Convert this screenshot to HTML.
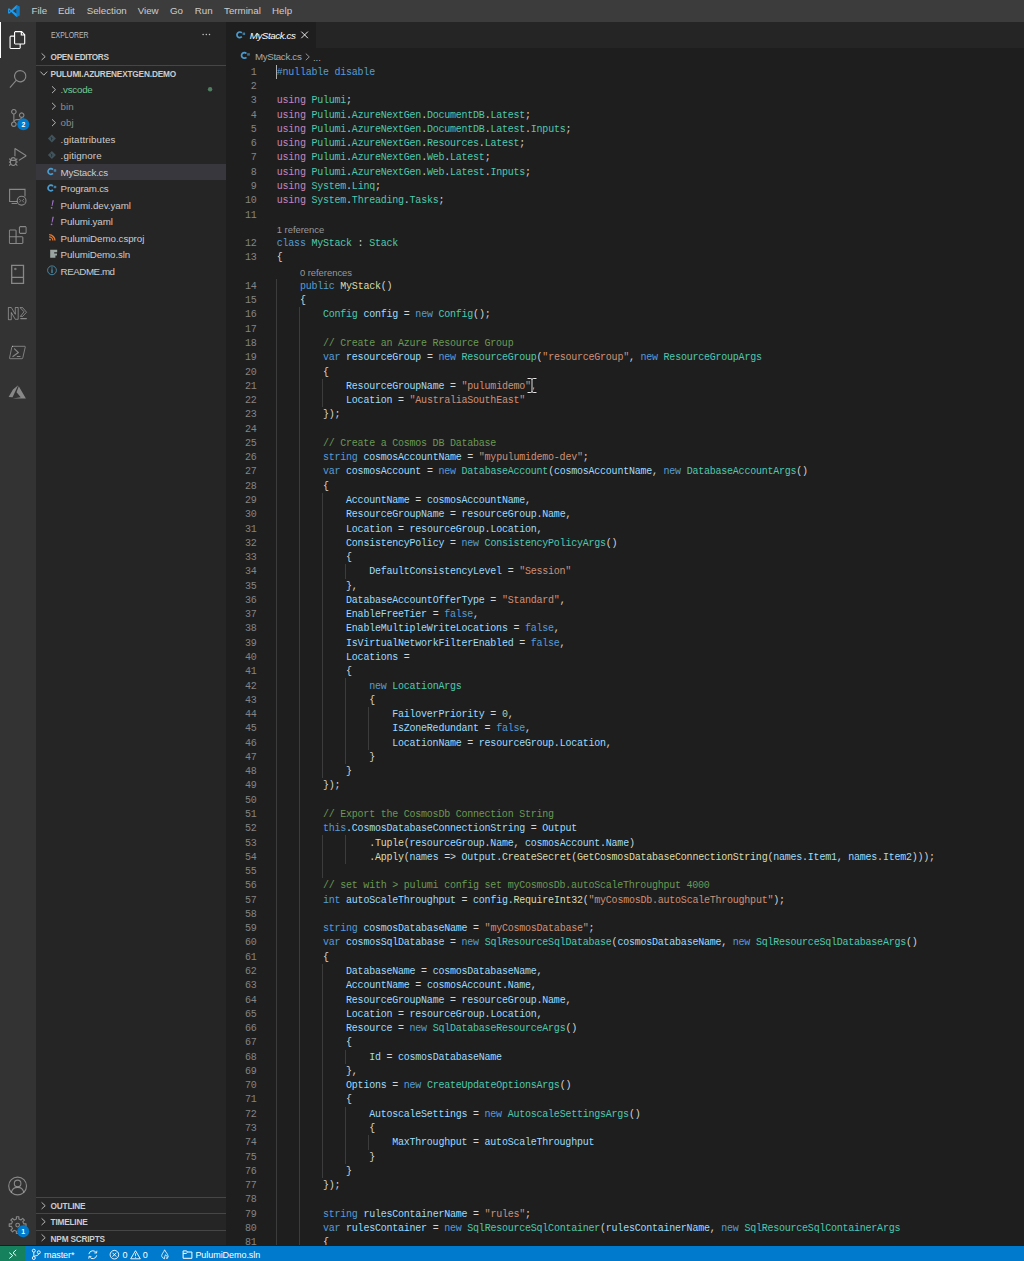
<!DOCTYPE html>
<html lang="en"><head><meta charset="utf-8"><title>MyStack.cs - Pulumi.AzureNextGen.Demo - Visual Studio Code</title>
<style>
*{box-sizing:border-box;margin:0;padding:0}
html,body{width:1024px;height:1261px;overflow:hidden;background:#1e1e1e}
body{position:relative;font-family:"Liberation Sans",sans-serif;font-size:9.75px;color:#ccc;-webkit-font-smoothing:antialiased}
i{font-style:normal}
#title{position:absolute;left:0;top:0;width:1024px;height:22px;background:#3c3c3c}
#title .m{position:absolute;top:0;height:22px;line-height:21.5px;color:#ccc;font-size:9.75px;white-space:nowrap}
#act{position:absolute;left:0;top:22px;width:35.5px;height:1222.5px;background:#333}
#side{position:absolute;left:35.5px;top:22px;width:190px;height:1222.5px;background:#252526}
#edit{position:absolute;left:225.5px;top:22px;width:798.5px;height:1222.5px;background:#1e1e1e}
#tabs{position:absolute;left:0;top:0;width:100%;height:26.25px;background:#252526}
#tab{position:absolute;left:0;top:0;width:90.6px;height:26.25px;background:#1e1e1e}
#bc{position:absolute;left:0;top:26.25px;width:100%;height:16.5px}
#code{position:absolute;left:0;top:42.75px;width:100%;height:1180px;overflow:hidden;font-family:"Liberation Mono",monospace;font-size:10px;letter-spacing:-0.23px;line-height:14.25px;color:#d4d4d4;white-space:pre}
#code .ln{position:absolute;left:0;width:31px;text-align:right;color:#858585}
#code .cd{position:absolute;left:51.3px}
#code .cl{position:absolute;font-family:"Liberation Sans",sans-serif;font-size:9.45px;letter-spacing:-.03px;color:#999}
#code .g{position:absolute;width:1px;height:14.3px;background:#3c3c3c}
.k{color:#569cd6}.u{color:#c586c0}.t{color:#4ec9b0}.s{color:#ce9178}.c{color:#6a9955}.v{color:#9cdcfe}.f{color:#dcdcaa}.n{color:#b5cea8}
#side .hd{position:absolute;left:15.1px;top:0;height:26.25px;line-height:28.2px;font-size:8.25px;color:#bbb}
#side .ph{position:absolute;left:0;width:190px;height:16.5px;line-height:19px;font-size:8.25px;font-weight:bold;color:#ccc;white-space:nowrap}
#side .ph span{position:absolute;left:15.1px}
#side .sep{position:absolute;left:0;width:190px;height:1px;background:rgba(204,204,204,.2)}
#side .r{position:absolute;left:0.5px;width:189.5px;height:16.5px;line-height:18.6px;color:#ccc;white-space:nowrap}
#side .r span{position:absolute;left:24.6px}
#side svg{position:absolute;overflow:visible}
#side .sel{background:#37373d}
#status{position:absolute;left:0;top:1245.5px;width:1024px;height:15.5px;background:#007acc;color:#fff;font-size:9px;line-height:16.5px;white-space:nowrap}
#remote{position:absolute;left:0;top:0;width:25px;height:15.5px;background:#16825d}
#status span{position:absolute;top:0;line-height:18.4px}
</style></head><body>
<div id="title">
<svg style="position:absolute;left:7.5px;top:5.2px;width:12px;height:12px" viewBox="0 0 100 100"><path fill="#1f9cf0" d="M71 1 L96 12 V88 L71 99 L27 58 L9 72 L1 68 V32 L9 28 L27 42 Z M71 28 L40 50 L71 72 Z M10 40 V60 L21 50 Z"/><path fill="#0065a9" d="M71 1 L96 12 V88 L71 99 Z" opacity=".55"/></svg>
<span class="m" style="left:31.5px">File</span><span class="m" style="left:58px">Edit</span><span class="m" style="left:86.7px">Selection</span><span class="m" style="left:137.7px">View</span><span class="m" style="left:170px">Go</span><span class="m" style="left:194.7px">Run</span><span class="m" style="left:224px">Terminal</span><span class="m" style="left:272px">Help</span>
</div>
<div id="act">
<div style="position:absolute;left:0;top:0;width:1.4px;height:36px;background:#fff"></div>
<svg style="position:absolute;left:0;top:0;width:36px;height:1222.5px" viewBox="0 22 36 1222.5" fill="none">
<!-- explorer -->
<svg x="8.75" y="31" width="18" height="18" viewBox="0 0 24 24"><path fill="#fff" d="M17.5 0h-9L7 1.5V6H2.500L1 7.500v15.070L2.500 24h12.070L16 22.570V18h4.700l1.300-1.430V4.500L17.500 0zm0 2.120l2.380 2.380H17.500V2.120zm-3 20.380h-12v-15H7v9.070L8.500 18h6v4.500zm6-6h-12v-15H16V6h4.500v10.500z"/></svg>
<g fill="#fff" fill-opacity=".42" stroke="none">
<!-- search -->
<svg x="8.75" y="70" width="18" height="18" viewBox="0 0 24 24"><path d="M15.250 0a8.250 8.250 0 0 0-6.180 13.720L1 22.880l1.120 1 8.050-9.120A8.251 8.251 0 1 0 15.250.010V0zm0 15a6.750 6.750 0 1 1 0-13.500 6.750 6.750 0 0 1 0 13.500z"/></svg>
<!-- scm -->
<svg x="8.75" y="109" width="18" height="18" viewBox="0 0 24 24"><path d="M21.007 8.222A3.738 3.738 0 0 0 15.045 5.200a3.737 3.737 0 0 0 1.156 6.583 2.988 2.988 0 0 1-2.668 1.670h-2.990a4.456 4.456 0 0 0-2.989 1.165V7.400a3.737 3.737 0 1 0-1.494 0v9.117a3.776 3.776 0 1 0 1.816.099 2.990 2.990 0 0 1 2.668-1.667h2.990a4.484 4.484 0 0 0 4.223-3.039 3.736 3.736 0 0 0 3.250-3.687zM4.565 3.738a2.242 2.242 0 1 1 4.484 0 2.242 2.242 0 0 1-4.484 0zm4.484 16.441a2.242 2.242 0 1 1-4.484 0 2.242 2.242 0 0 1 4.484 0zm8.221-9.715a2.242 2.242 0 1 1 0-4.485 2.242 2.242 0 0 1 0 4.485z"/></svg>
<!-- debug -->
<svg x="8.75" y="148" width="18" height="18" viewBox="0 0 24 24"><path d="M10.940 13.500l-1.320 1.320a3.730 3.730 0 0 0-7.240 0L1.060 13.500 0 14.560l1.720 1.720-.220.220V18H0v1.500h1.500v.080c.077.489.214.966.410 1.420L0 22.940 1.060 24l1.650-1.650A4.308 4.308 0 0 0 6 24a4.310 4.310 0 0 0 3.290-1.650L10.940 24 12 22.940 10.090 21c.198-.464.336-.951.410-1.450v-.100H12V18h-1.500v-1.500l-.220-.220L12 14.560l-1.060-1.060zM6 13.500a2.250 2.250 0 0 1 2.250 2.250h-4.500A2.250 2.250 0 0 1 6 13.500zm3 6a3.330 3.330 0 0 1-3 3 3.330 3.330 0 0 1-3-3v-2.250h6v2.250zm14.760-9.900v1.260L13.500 17.370V15.600l8.500-5.370L9 2v9.460a5.070 5.070 0 0 0-1.500-.720V.630L8.640 0l15.120 9.600z"/></svg>
<!-- extensions -->
<svg x="8.75" y="226" width="18" height="18" viewBox="0 0 24 24"><path d="M13.500 1.500L15 0h7.500L24 1.500V9l-1.500 1.500H15L13.500 9V1.500zm1.500 0V9h7.500V1.500H15zM0 15V6l1.500-1.500H9L10.500 6v7.500H18l1.500 1.500v7.500L18 24H1.500L0 22.500V15zm9-1.500V6H1.500v7.500H9zM9 15H1.500v7.500H9V15zm1.500 7.500H18V15h-7.500v7.500z"/></svg>
<!-- azure -->
<path transform="translate(6.870,381.530) scale(0.865)" d="M13.050 4.240L6.560 18.050L2 18L7.090 9.240L13.050 4.240ZM13.750 5.330L22 19.760H6.740L16.040 18.100L11.170 12.310L13.750 5.330Z"/>
</g>
<g stroke="#fff" stroke-opacity=".42" stroke-width="1.1" fill="none" stroke-linejoin="round" stroke-linecap="round">
<!-- remote explorer -->
<path d="M25 196 V189.400 H9.600 V201.500 H16.800 M12 203.500 H16.600" stroke-linejoin="miter"/>
<circle cx="21.600" cy="200.700" r="4.400"/>
<path d="M19.500 199.300 l1.300 1.400 l-1.300 1.400 M23.700 199.300 l-1.300 1.400 l1.300 1.400" stroke-width=".8"/>
<!-- icon 7 -->
<path d="M11.700 265.400 H23.500 V283.300 H11.700 Z M11.700 277.300 H23.500" stroke-width="1.300" stroke-linejoin="miter"/>
<circle cx="15.200" cy="269" r=".8" stroke-width=".7"/>
<!-- Nx -->
<path d="M8.400 319.300 V307.500 H11.300 L15.300 314.300 V307.500 H18.200 V319.300 H15.300 L11.300 312.500 V319.300 Z" stroke-width=".9"/>
<path d="M20.400 307.600 H22.600 L26.500 312.200 L22.600 316.400 H20.400 L23.800 312.100 Z" stroke-width=".9"/>
<path d="M20.800 318.600 H26.300" stroke-width="1.300"/>
<!-- powershell -->
<path d="M12.600 346.300 H24.600 Q25.500 346.300 25.200 347.300 L22.800 357.800 Q22.600 358.700 21.700 358.700 H10.200 Q9.300 358.700 9.600 357.700 L11.800 347.200 Q12 346.300 12.600 346.300 Z" stroke-width=".9"/>
<path d="M14.500 348.900 L18.400 352.600 L12.900 356.500 M17.300 356.500 H20" stroke-width="1.200"/>
<!-- account -->
<circle cx="17.600" cy="1186" r="8.900"/>
<circle cx="17.600" cy="1183.400" r="3.300"/>
<path d="M11.400 1192.200 A6.400 6.400 0 0 1 23.800 1192.200"/>
<!-- gear -->
<g transform="translate(8.500,1216) scale(0.760)"><path stroke-width="1.450" d="M10.400 3.960 L10.360 0.920 L13.640 0.920 L13.600 3.960 L16.560 5.180 L18.670 3 L21 5.330 L18.820 7.440 L20.040 10.400 L23.080 10.360 L23.080 13.640 L20.040 13.600 L18.820 16.560 L21 18.670 L18.670 21 L16.560 18.820 L13.600 20.040 L13.640 23.080 L10.360 23.080 L10.400 20.040 L7.440 18.820 L5.330 21 L3 18.670 L5.180 16.560 L3.960 13.600 L0.920 13.640 L0.920 10.360 L3.960 10.400 L5.180 7.440 L3 5.330 L5.330 3 L7.440 5.180Z"/><circle cx="12" cy="12" r="2.400" stroke-width="1.450"/></g>
</g>
<!-- badges -->
<circle cx="23.300" cy="124.300" r="6" fill="#007acc"/>
<circle cx="23.200" cy="1231.200" r="6" fill="#007acc"/>
<text x="23.300" y="126.800" fill="#fff" font-family="Liberation Sans, sans-serif" font-size="6.800" font-weight="bold" text-anchor="middle">2</text>
<text x="23.200" y="1233.700" fill="#fff" font-family="Liberation Sans, sans-serif" font-size="6.800" font-weight="bold" text-anchor="middle">1</text>
</svg>
</div>
<div id="side">
<svg style="left:0;top:0;width:190px;height:300px;z-index:2" viewBox="35.5 22 190 300">
<path d="M51.500 86.30 l3.500 3.400 l-3.500 3.400" fill="none" stroke="#c5c5c5" stroke-width=".9"/>
<path d="M51.500 102.80 l3.500 3.400 l-3.500 3.400" fill="none" stroke="#c5c5c5" stroke-width=".9"/>
<path d="M51.500 119.30 l3.500 3.400 l-3.500 3.400" fill="none" stroke="#c5c5c5" stroke-width=".9"/>
<circle cx="209.600" cy="89.20" r="2.200" fill="#73c991" fill-opacity=".55"/>
<g transform="translate(51.400,138.40)"><path d="M0 -4 L4 0 L0 4 L-4 0 Z" fill="#41535b"/><path d="M-1.300 -1.500 L0.700 0.500 M-0.400 -0.600 V1.800" stroke="#252526" stroke-width=".7" fill="none"/></g>
<g transform="translate(51.400,154.90)"><path d="M0 -4 L4 0 L0 4 L-4 0 Z" fill="#41535b"/><path d="M-1.300 -1.500 L0.700 0.500 M-0.400 -0.600 V1.800" stroke="#252526" stroke-width=".7" fill="none"/></g>
<g transform="translate(50.300,171.50)" fill="none" stroke="#4a9cd0"><path d="M2.100 -1.900 A2.800 2.800 0 1 0 2.100 1.900" stroke-width="1.700"/><path d="M3.600 -2.300 V0.300 M4.800 -2.300 V0.300 M2.900 -1.500 H5.500 M2.900 -0.500 H5.500" stroke-width=".55"/></g>
<g transform="translate(50.300,188.00)" fill="none" stroke="#4a9cd0"><path d="M2.100 -1.900 A2.800 2.800 0 1 0 2.100 1.900" stroke-width="1.700"/><path d="M3.600 -2.300 V0.300 M4.800 -2.300 V0.300 M2.900 -1.500 H5.500 M2.900 -0.500 H5.500" stroke-width=".55"/></g>
<g transform="translate(51.400,204.50)"><path d="M0.600 -4.200 L2 -4.200 L0.500 1.600 L-0.300 1.600 Z" fill="#a074c4"/><circle cx="-.3" cy="3.300" r=".85" fill="#a074c4"/></g>
<g transform="translate(51.400,221.00)"><path d="M0.600 -4.200 L2 -4.200 L0.500 1.600 L-0.300 1.600 Z" fill="#a074c4"/><circle cx="-.3" cy="3.300" r=".85" fill="#a074c4"/></g>
<g transform="translate(48.600,240.60)" fill="none" stroke="#e37933"><circle cx=".9" cy="-.9" r=".9" fill="#e37933" stroke="none"/><path d="M0 -3.800 A3.800 3.800 0 0 1 3.800 0" stroke-width="1.300"/><path d="M0 -5.900 A5.900 5.900 0 0 1 5.900 0" stroke-width="1.300"/></g>
<path transform="translate(49.700,249.80)" d="M0 0 H7 V2.400 H4 V3.600 H6.800 V5.700 H5.200 V7.900 H0 Z" fill="#9aa5a1"/>
<g transform="translate(51.500,270.30)"><circle r="4.400" fill="none" stroke="#519aba" stroke-width=".8"/><circle cy="-2.300" r=".7" fill="#519aba"/><path d="M0 -1 V2.700" stroke="#519aba" stroke-width="1.200"/></g>
</svg>
<div class="hd" style="transform:scaleX(.837);transform-origin:0 0">EXPLORER</div>
<svg style="left:166px;top:11.4px;width:9px;height:3px" viewBox="0 0 9 3"><circle cx="1.1" cy="1.5" r=".75" fill="#c5c5c5"/><circle cx="4.3" cy="1.5" r=".75" fill="#c5c5c5"/><circle cx="7.5" cy="1.5" r=".75" fill="#c5c5c5"/></svg>
<div class="ph" style="top:26.25px"><svg style="left:5.6px;top:4.6px;width:5px;height:7.4px" viewBox="0 0 5 7.4"><path d="M.6 .4 L4.2 3.700 L.6 7" fill="none" stroke="#c5c5c5" stroke-width=".9"/></svg><span style="letter-spacing:-0.35px">OPEN EDITORS</span></div>
<div class="sep" style="top:42.5px"></div>
<div class="ph" style="top:42.75px"><svg style="left:4px;top:6.4px;width:7.6px;height:5px" viewBox="0 0 7.6 5"><path d="M.4 .6 L3.800 4.200 L7.200 .6" fill="none" stroke="#c5c5c5" stroke-width=".9"/></svg><span style="letter-spacing:-0.16px">PULUMI.AZURENEXTGEN.DEMO</span></div>
<div class="r" style="top:59.25px;color:#73c991"><!--I0--><span style="letter-spacing:-0.24px">.vscode</span></div>
<div class="r" style="top:75.75px;color:#8c8c8c"><!--I1--><span style="letter-spacing:0.05px">bin</span></div>
<div class="r" style="top:92.25px;color:#8c8c8c"><!--I2--><span style="letter-spacing:0.05px">obj</span></div>
<div class="r" style="top:108.75px"><!--I3--><span style="letter-spacing:0.13px">.gitattributes</span></div>
<div class="r" style="top:125.25px"><!--I4--><span style="letter-spacing:0.10px">.gitignore</span></div>
<div class="r sel" style="top:141.75px"><!--I5--><span style="letter-spacing:-0.26px">MyStack.cs</span></div>
<div class="r" style="top:158.25px"><!--I6--><span style="letter-spacing:-0.19px">Program.cs</span></div>
<div class="r" style="top:174.75px"><!--I7--><span style="letter-spacing:-0.03px">Pulumi.dev.yaml</span></div>
<div class="r" style="top:191.25px"><!--I8--><span style="letter-spacing:-0.08px">Pulumi.yaml</span></div>
<div class="r" style="top:207.75px"><!--I9--><span style="letter-spacing:-0.05px">PulumiDemo.csproj</span></div>
<div class="r" style="top:224.25px"><!--I10--><span style="letter-spacing:-0.10px">PulumiDemo.sln</span></div>
<div class="r" style="top:240.75px"><!--I11--><span style="letter-spacing:-0.44px">README.md</span></div>
<div class="sep" style="top:1174.80px"></div>
<div class="ph" style="top:1175.00px"><svg style="left:5.6px;top:4.6px;width:5px;height:7.4px" viewBox="0 0 5 7.4"><path d="M.6 .4 L4.2 3.700 L.6 7" fill="none" stroke="#c5c5c5" stroke-width=".9"/></svg><span style="letter-spacing:-0.2px">OUTLINE</span></div>
<div class="sep" style="top:1191.20px"></div>
<div class="ph" style="top:1191.40px"><svg style="left:5.6px;top:4.6px;width:5px;height:7.4px" viewBox="0 0 5 7.4"><path d="M.6 .4 L4.2 3.700 L.6 7" fill="none" stroke="#c5c5c5" stroke-width=".9"/></svg><span style="letter-spacing:-0.2px">TIMELINE</span></div>
<div class="sep" style="top:1207.50px"></div>
<div class="ph" style="top:1207.70px"><svg style="left:5.6px;top:4.6px;width:5px;height:7.4px" viewBox="0 0 5 7.4"><path d="M.6 .4 L4.2 3.700 L.6 7" fill="none" stroke="#c5c5c5" stroke-width=".9"/></svg><span style="letter-spacing:-0.2px">NPM SCRIPTS</span></div>
</div>
<div id="edit">
<div id="tabs"><div id="tab"><span style="position:absolute;left:24.2px;top:0;line-height:28px;font-style:italic;color:#fff;letter-spacing:-.41px">MyStack.cs</span></div></div>
<div id="bc"><span style="position:absolute;left:29.400px;top:0;line-height:17.8px;color:#a9a9a9;letter-spacing:-.33px">MyStack.cs</span><span style="position:absolute;left:87.400px;top:0;line-height:19px;color:#a9a9a9">...</span></div>
<svg style="position:absolute;left:0;top:0;width:120px;height:44px;overflow:visible" viewBox="225.5 22 120 44">
<g transform="translate(239.20,34.80)" fill="none" stroke="#4a9cd0"><path d="M2.100 -1.900 A2.800 2.800 0 1 0 2.100 1.900" stroke-width="1.700"/><path d="M3.600 -2.300 V0.300 M4.800 -2.300 V0.300 M2.900 -1.500 H5.500 M2.900 -0.500 H5.500" stroke-width=".55"/></g>
<g transform="translate(243.80,55.40)" fill="none" stroke="#4a9cd0"><path d="M2.100 -1.900 A2.800 2.800 0 1 0 2.100 1.900" stroke-width="1.700"/><path d="M3.600 -2.300 V0.300 M4.800 -2.300 V0.300 M2.900 -1.500 H5.500 M2.900 -0.500 H5.500" stroke-width=".55"/></g>
<path d="M300.800 31.600 L307.400 38.200 M307.400 31.600 L300.800 38.200" stroke="#fff" stroke-width=".9" fill="none"/>
<path d="M305.300 53.600 L308.800 56.900 L305.300 60.200" stroke="#a9a9a9" stroke-width=".85" fill="none"/>
</svg>
<div id="code">
<b class="g" style="top:214.09px;left:50.50px"></b>
<b class="g" style="top:228.37px;left:50.50px"></b>
<b class="g" style="top:242.64px;left:50.50px"></b>
<b class="g" style="top:242.64px;left:73.58px"></b>
<b class="g" style="top:256.91px;left:50.50px"></b>
<b class="g" style="top:256.91px;left:73.58px"></b>
<b class="g" style="top:271.19px;left:50.50px"></b>
<b class="g" style="top:271.19px;left:73.58px"></b>
<b class="g" style="top:285.46px;left:50.50px"></b>
<b class="g" style="top:285.46px;left:73.58px"></b>
<b class="g" style="top:299.73px;left:50.50px"></b>
<b class="g" style="top:299.73px;left:73.58px"></b>
<b class="g" style="top:314.01px;left:50.50px"></b>
<b class="g" style="top:314.01px;left:73.58px"></b>
<b class="g" style="top:314.01px;left:96.66px"></b>
<b class="g" style="top:328.28px;left:50.50px"></b>
<b class="g" style="top:328.28px;left:73.58px"></b>
<b class="g" style="top:328.28px;left:96.66px"></b>
<b class="g" style="top:342.55px;left:50.50px"></b>
<b class="g" style="top:342.55px;left:73.58px"></b>
<b class="g" style="top:356.83px;left:50.50px"></b>
<b class="g" style="top:356.83px;left:73.58px"></b>
<b class="g" style="top:371.10px;left:50.50px"></b>
<b class="g" style="top:371.10px;left:73.58px"></b>
<b class="g" style="top:385.37px;left:50.50px"></b>
<b class="g" style="top:385.37px;left:73.58px"></b>
<b class="g" style="top:399.64px;left:50.50px"></b>
<b class="g" style="top:399.64px;left:73.58px"></b>
<b class="g" style="top:413.92px;left:50.50px"></b>
<b class="g" style="top:413.92px;left:73.58px"></b>
<b class="g" style="top:428.19px;left:50.50px"></b>
<b class="g" style="top:428.19px;left:73.58px"></b>
<b class="g" style="top:428.19px;left:96.66px"></b>
<b class="g" style="top:442.46px;left:50.50px"></b>
<b class="g" style="top:442.46px;left:73.58px"></b>
<b class="g" style="top:442.46px;left:96.66px"></b>
<b class="g" style="top:456.74px;left:50.50px"></b>
<b class="g" style="top:456.74px;left:73.58px"></b>
<b class="g" style="top:456.74px;left:96.66px"></b>
<b class="g" style="top:471.01px;left:50.50px"></b>
<b class="g" style="top:471.01px;left:73.58px"></b>
<b class="g" style="top:471.01px;left:96.66px"></b>
<b class="g" style="top:485.28px;left:50.50px"></b>
<b class="g" style="top:485.28px;left:73.58px"></b>
<b class="g" style="top:485.28px;left:96.66px"></b>
<b class="g" style="top:499.56px;left:50.50px"></b>
<b class="g" style="top:499.56px;left:73.58px"></b>
<b class="g" style="top:499.56px;left:96.66px"></b>
<b class="g" style="top:499.56px;left:119.74px"></b>
<b class="g" style="top:513.83px;left:50.50px"></b>
<b class="g" style="top:513.83px;left:73.58px"></b>
<b class="g" style="top:513.83px;left:96.66px"></b>
<b class="g" style="top:528.10px;left:50.50px"></b>
<b class="g" style="top:528.10px;left:73.58px"></b>
<b class="g" style="top:528.10px;left:96.66px"></b>
<b class="g" style="top:542.37px;left:50.50px"></b>
<b class="g" style="top:542.37px;left:73.58px"></b>
<b class="g" style="top:542.37px;left:96.66px"></b>
<b class="g" style="top:556.65px;left:50.50px"></b>
<b class="g" style="top:556.65px;left:73.58px"></b>
<b class="g" style="top:556.65px;left:96.66px"></b>
<b class="g" style="top:570.92px;left:50.50px"></b>
<b class="g" style="top:570.92px;left:73.58px"></b>
<b class="g" style="top:570.92px;left:96.66px"></b>
<b class="g" style="top:585.19px;left:50.50px"></b>
<b class="g" style="top:585.19px;left:73.58px"></b>
<b class="g" style="top:585.19px;left:96.66px"></b>
<b class="g" style="top:599.47px;left:50.50px"></b>
<b class="g" style="top:599.47px;left:73.58px"></b>
<b class="g" style="top:599.47px;left:96.66px"></b>
<b class="g" style="top:613.74px;left:50.50px"></b>
<b class="g" style="top:613.74px;left:73.58px"></b>
<b class="g" style="top:613.74px;left:96.66px"></b>
<b class="g" style="top:613.74px;left:119.74px"></b>
<b class="g" style="top:628.01px;left:50.50px"></b>
<b class="g" style="top:628.01px;left:73.58px"></b>
<b class="g" style="top:628.01px;left:96.66px"></b>
<b class="g" style="top:628.01px;left:119.74px"></b>
<b class="g" style="top:642.29px;left:50.50px"></b>
<b class="g" style="top:642.29px;left:73.58px"></b>
<b class="g" style="top:642.29px;left:96.66px"></b>
<b class="g" style="top:642.29px;left:119.74px"></b>
<b class="g" style="top:642.29px;left:142.82px"></b>
<b class="g" style="top:656.56px;left:50.50px"></b>
<b class="g" style="top:656.56px;left:73.58px"></b>
<b class="g" style="top:656.56px;left:96.66px"></b>
<b class="g" style="top:656.56px;left:119.74px"></b>
<b class="g" style="top:656.56px;left:142.82px"></b>
<b class="g" style="top:670.83px;left:50.50px"></b>
<b class="g" style="top:670.83px;left:73.58px"></b>
<b class="g" style="top:670.83px;left:96.66px"></b>
<b class="g" style="top:670.83px;left:119.74px"></b>
<b class="g" style="top:670.83px;left:142.82px"></b>
<b class="g" style="top:685.10px;left:50.50px"></b>
<b class="g" style="top:685.10px;left:73.58px"></b>
<b class="g" style="top:685.10px;left:96.66px"></b>
<b class="g" style="top:685.10px;left:119.74px"></b>
<b class="g" style="top:699.38px;left:50.50px"></b>
<b class="g" style="top:699.38px;left:73.58px"></b>
<b class="g" style="top:699.38px;left:96.66px"></b>
<b class="g" style="top:713.65px;left:50.50px"></b>
<b class="g" style="top:713.65px;left:73.58px"></b>
<b class="g" style="top:727.92px;left:50.50px"></b>
<b class="g" style="top:727.92px;left:73.58px"></b>
<b class="g" style="top:742.20px;left:50.50px"></b>
<b class="g" style="top:742.20px;left:73.58px"></b>
<b class="g" style="top:756.47px;left:50.50px"></b>
<b class="g" style="top:756.47px;left:73.58px"></b>
<b class="g" style="top:770.74px;left:50.50px"></b>
<b class="g" style="top:770.74px;left:73.58px"></b>
<b class="g" style="top:770.74px;left:96.66px"></b>
<b class="g" style="top:770.74px;left:119.74px"></b>
<b class="g" style="top:785.02px;left:50.50px"></b>
<b class="g" style="top:785.02px;left:73.58px"></b>
<b class="g" style="top:785.02px;left:96.66px"></b>
<b class="g" style="top:785.02px;left:119.74px"></b>
<b class="g" style="top:799.29px;left:50.50px"></b>
<b class="g" style="top:799.29px;left:73.58px"></b>
<b class="g" style="top:799.29px;left:96.66px"></b>
<b class="g" style="top:813.56px;left:50.50px"></b>
<b class="g" style="top:813.56px;left:73.58px"></b>
<b class="g" style="top:827.83px;left:50.50px"></b>
<b class="g" style="top:827.83px;left:73.58px"></b>
<b class="g" style="top:842.11px;left:50.50px"></b>
<b class="g" style="top:842.11px;left:73.58px"></b>
<b class="g" style="top:856.38px;left:50.50px"></b>
<b class="g" style="top:856.38px;left:73.58px"></b>
<b class="g" style="top:870.65px;left:50.50px"></b>
<b class="g" style="top:870.65px;left:73.58px"></b>
<b class="g" style="top:884.93px;left:50.50px"></b>
<b class="g" style="top:884.93px;left:73.58px"></b>
<b class="g" style="top:899.20px;left:50.50px"></b>
<b class="g" style="top:899.20px;left:73.58px"></b>
<b class="g" style="top:899.20px;left:96.66px"></b>
<b class="g" style="top:913.47px;left:50.50px"></b>
<b class="g" style="top:913.47px;left:73.58px"></b>
<b class="g" style="top:913.47px;left:96.66px"></b>
<b class="g" style="top:927.75px;left:50.50px"></b>
<b class="g" style="top:927.75px;left:73.58px"></b>
<b class="g" style="top:927.75px;left:96.66px"></b>
<b class="g" style="top:942.02px;left:50.50px"></b>
<b class="g" style="top:942.02px;left:73.58px"></b>
<b class="g" style="top:942.02px;left:96.66px"></b>
<b class="g" style="top:956.29px;left:50.50px"></b>
<b class="g" style="top:956.29px;left:73.58px"></b>
<b class="g" style="top:956.29px;left:96.66px"></b>
<b class="g" style="top:970.56px;left:50.50px"></b>
<b class="g" style="top:970.56px;left:73.58px"></b>
<b class="g" style="top:970.56px;left:96.66px"></b>
<b class="g" style="top:984.84px;left:50.50px"></b>
<b class="g" style="top:984.84px;left:73.58px"></b>
<b class="g" style="top:984.84px;left:96.66px"></b>
<b class="g" style="top:984.84px;left:119.74px"></b>
<b class="g" style="top:999.11px;left:50.50px"></b>
<b class="g" style="top:999.11px;left:73.58px"></b>
<b class="g" style="top:999.11px;left:96.66px"></b>
<b class="g" style="top:1013.38px;left:50.50px"></b>
<b class="g" style="top:1013.38px;left:73.58px"></b>
<b class="g" style="top:1013.38px;left:96.66px"></b>
<b class="g" style="top:1027.66px;left:50.50px"></b>
<b class="g" style="top:1027.66px;left:73.58px"></b>
<b class="g" style="top:1027.66px;left:96.66px"></b>
<b class="g" style="top:1041.93px;left:50.50px"></b>
<b class="g" style="top:1041.93px;left:73.58px"></b>
<b class="g" style="top:1041.93px;left:96.66px"></b>
<b class="g" style="top:1041.93px;left:119.74px"></b>
<b class="g" style="top:1056.20px;left:50.50px"></b>
<b class="g" style="top:1056.20px;left:73.58px"></b>
<b class="g" style="top:1056.20px;left:96.66px"></b>
<b class="g" style="top:1056.20px;left:119.74px"></b>
<b class="g" style="top:1070.48px;left:50.50px"></b>
<b class="g" style="top:1070.48px;left:73.58px"></b>
<b class="g" style="top:1070.48px;left:96.66px"></b>
<b class="g" style="top:1070.48px;left:119.74px"></b>
<b class="g" style="top:1070.48px;left:142.82px"></b>
<b class="g" style="top:1084.75px;left:50.50px"></b>
<b class="g" style="top:1084.75px;left:73.58px"></b>
<b class="g" style="top:1084.75px;left:96.66px"></b>
<b class="g" style="top:1084.75px;left:119.74px"></b>
<b class="g" style="top:1099.02px;left:50.50px"></b>
<b class="g" style="top:1099.02px;left:73.58px"></b>
<b class="g" style="top:1099.02px;left:96.66px"></b>
<b class="g" style="top:1113.29px;left:50.50px"></b>
<b class="g" style="top:1113.29px;left:73.58px"></b>
<b class="g" style="top:1127.57px;left:50.50px"></b>
<b class="g" style="top:1127.57px;left:73.58px"></b>
<b class="g" style="top:1141.84px;left:50.50px"></b>
<b class="g" style="top:1141.84px;left:73.58px"></b>
<b class="g" style="top:1156.11px;left:50.50px"></b>
<b class="g" style="top:1156.11px;left:73.58px"></b>
<b class="g" style="top:1170.39px;left:50.50px"></b>
<b class="g" style="top:1170.39px;left:73.58px"></b>
<b style="position:absolute;left:50.4px;top:0;width:1.6px;height:14.3px;background:#aeafad"></b>
<div class="ln" style="top:1.05px">1</div>
<div class="cd" style="top:1.05px"><i class="k">#nullable disable</i></div>
<div class="ln" style="top:15.32px">2</div>
<div class="ln" style="top:29.60px">3</div>
<div class="cd" style="top:29.60px"><i class="u">using</i> <i class="t">Pulumi</i>;</div>
<div class="ln" style="top:43.87px">4</div>
<div class="cd" style="top:43.87px"><i class="u">using</i> <i class="t">Pulumi</i>.<i class="t">AzureNextGen</i>.<i class="t">DocumentDB</i>.<i class="t">Latest</i>;</div>
<div class="ln" style="top:58.14px">5</div>
<div class="cd" style="top:58.14px"><i class="u">using</i> <i class="t">Pulumi</i>.<i class="t">AzureNextGen</i>.<i class="t">DocumentDB</i>.<i class="t">Latest</i>.<i class="t">Inputs</i>;</div>
<div class="ln" style="top:72.41px">6</div>
<div class="cd" style="top:72.41px"><i class="u">using</i> <i class="t">Pulumi</i>.<i class="t">AzureNextGen</i>.<i class="t">Resources</i>.<i class="t">Latest</i>;</div>
<div class="ln" style="top:86.69px">7</div>
<div class="cd" style="top:86.69px"><i class="u">using</i> <i class="t">Pulumi</i>.<i class="t">AzureNextGen</i>.<i class="t">Web</i>.<i class="t">Latest</i>;</div>
<div class="ln" style="top:100.96px">8</div>
<div class="cd" style="top:100.96px"><i class="u">using</i> <i class="t">Pulumi</i>.<i class="t">AzureNextGen</i>.<i class="t">Web</i>.<i class="t">Latest</i>.<i class="t">Inputs</i>;</div>
<div class="ln" style="top:115.23px">9</div>
<div class="cd" style="top:115.23px"><i class="u">using</i> <i class="t">System</i>.<i class="t">Linq</i>;</div>
<div class="ln" style="top:129.51px">10</div>
<div class="cd" style="top:129.51px"><i class="u">using</i> <i class="t">System</i>.<i class="t">Threading</i>.<i class="t">Tasks</i>;</div>
<div class="ln" style="top:143.78px">11</div>
<div class="cl" style="top:158.30px;left:51.30px">1 reference</div>
<div class="ln" style="top:172.33px">12</div>
<div class="cd" style="top:172.33px"><i class="k">class</i> <i class="t">MyStack</i> : <i class="t">Stack</i></div>
<div class="ln" style="top:186.60px">13</div>
<div class="cd" style="top:186.60px">{</div>
<div class="cl" style="top:201.12px;left:74.38px">0 references</div>
<div class="ln" style="top:215.14px">14</div>
<div class="cd" style="top:215.14px">    <i class="k">public</i> <i class="f">MyStack</i>()</div>
<div class="ln" style="top:229.42px">15</div>
<div class="cd" style="top:229.42px">    {</div>
<div class="ln" style="top:243.69px">16</div>
<div class="cd" style="top:243.69px">        <i class="t">Config</i> <i class="v">config</i> = <i class="k">new</i> <i class="t">Config</i>();</div>
<div class="ln" style="top:257.96px">17</div>
<div class="ln" style="top:272.24px">18</div>
<div class="cd" style="top:272.24px">        <i class="c">// Create an Azure Resource Group</i></div>
<div class="ln" style="top:286.51px">19</div>
<div class="cd" style="top:286.51px">        <i class="k">var</i> <i class="v">resourceGroup</i> = <i class="k">new</i> <i class="t">ResourceGroup</i>(<i class="s">&quot;resourceGroup&quot;</i>, <i class="k">new</i> <i class="t">ResourceGroupArgs</i></div>
<div class="ln" style="top:300.78px">20</div>
<div class="cd" style="top:300.78px">        {</div>
<div class="ln" style="top:315.06px">21</div>
<div class="cd" style="top:315.06px">            <i class="v">ResourceGroupName</i> = <i class="s">&quot;pulumidemo&quot;</i>,</div>
<div class="ln" style="top:329.33px">22</div>
<div class="cd" style="top:329.33px">            <i class="v">Location</i> = <i class="s">&quot;AustraliaSouthEast&quot;</i></div>
<div class="ln" style="top:343.60px">23</div>
<div class="cd" style="top:343.60px">        });</div>
<div class="ln" style="top:357.88px">24</div>
<div class="ln" style="top:372.15px">25</div>
<div class="cd" style="top:372.15px">        <i class="c">// Create a Cosmos DB Database</i></div>
<div class="ln" style="top:386.42px">26</div>
<div class="cd" style="top:386.42px">        <i class="k">string</i> <i class="v">cosmosAccountName</i> = <i class="s">&quot;mypulumidemo-dev&quot;</i>;</div>
<div class="ln" style="top:400.69px">27</div>
<div class="cd" style="top:400.69px">        <i class="k">var</i> <i class="v">cosmosAccount</i> = <i class="k">new</i> <i class="t">DatabaseAccount</i>(<i class="v">cosmosAccountName</i>, <i class="k">new</i> <i class="t">DatabaseAccountArgs</i>()</div>
<div class="ln" style="top:414.97px">28</div>
<div class="cd" style="top:414.97px">        {</div>
<div class="ln" style="top:429.24px">29</div>
<div class="cd" style="top:429.24px">            <i class="v">AccountName</i> = <i class="v">cosmosAccountName</i>,</div>
<div class="ln" style="top:443.51px">30</div>
<div class="cd" style="top:443.51px">            <i class="v">ResourceGroupName</i> = <i class="v">resourceGroup</i>.<i class="v">Name</i>,</div>
<div class="ln" style="top:457.79px">31</div>
<div class="cd" style="top:457.79px">            <i class="v">Location</i> = <i class="v">resourceGroup</i>.<i class="v">Location</i>,</div>
<div class="ln" style="top:472.06px">32</div>
<div class="cd" style="top:472.06px">            <i class="v">ConsistencyPolicy</i> = <i class="k">new</i> <i class="t">ConsistencyPolicyArgs</i>()</div>
<div class="ln" style="top:486.33px">33</div>
<div class="cd" style="top:486.33px">            {</div>
<div class="ln" style="top:500.61px">34</div>
<div class="cd" style="top:500.61px">                <i class="v">DefaultConsistencyLevel</i> = <i class="s">&quot;Session&quot;</i></div>
<div class="ln" style="top:514.88px">35</div>
<div class="cd" style="top:514.88px">            },</div>
<div class="ln" style="top:529.15px">36</div>
<div class="cd" style="top:529.15px">            <i class="v">DatabaseAccountOfferType</i> = <i class="s">&quot;Standard&quot;</i>,</div>
<div class="ln" style="top:543.42px">37</div>
<div class="cd" style="top:543.42px">            <i class="v">EnableFreeTier</i> = <i class="k">false</i>,</div>
<div class="ln" style="top:557.70px">38</div>
<div class="cd" style="top:557.70px">            <i class="v">EnableMultipleWriteLocations</i> = <i class="k">false</i>,</div>
<div class="ln" style="top:571.97px">39</div>
<div class="cd" style="top:571.97px">            <i class="v">IsVirtualNetworkFilterEnabled</i> = <i class="k">false</i>,</div>
<div class="ln" style="top:586.24px">40</div>
<div class="cd" style="top:586.24px">            <i class="v">Locations</i> =</div>
<div class="ln" style="top:600.52px">41</div>
<div class="cd" style="top:600.52px">            {</div>
<div class="ln" style="top:614.79px">42</div>
<div class="cd" style="top:614.79px">                <i class="k">new</i> <i class="t">LocationArgs</i></div>
<div class="ln" style="top:629.06px">43</div>
<div class="cd" style="top:629.06px">                {</div>
<div class="ln" style="top:643.34px">44</div>
<div class="cd" style="top:643.34px">                    <i class="v">FailoverPriority</i> = <i class="n">0</i>,</div>
<div class="ln" style="top:657.61px">45</div>
<div class="cd" style="top:657.61px">                    <i class="v">IsZoneRedundant</i> = <i class="k">false</i>,</div>
<div class="ln" style="top:671.88px">46</div>
<div class="cd" style="top:671.88px">                    <i class="v">LocationName</i> = <i class="v">resourceGroup</i>.<i class="v">Location</i>,</div>
<div class="ln" style="top:686.15px">47</div>
<div class="cd" style="top:686.15px">                }</div>
<div class="ln" style="top:700.43px">48</div>
<div class="cd" style="top:700.43px">            }</div>
<div class="ln" style="top:714.70px">49</div>
<div class="cd" style="top:714.70px">        });</div>
<div class="ln" style="top:728.97px">50</div>
<div class="ln" style="top:743.25px">51</div>
<div class="cd" style="top:743.25px">        <i class="c">// Export the CosmosDb Connection String</i></div>
<div class="ln" style="top:757.52px">52</div>
<div class="cd" style="top:757.52px">        <i class="k">this</i>.<i class="v">CosmosDatabaseConnectionString</i> = <i class="v">Output</i></div>
<div class="ln" style="top:771.79px">53</div>
<div class="cd" style="top:771.79px">                .<i class="f">Tuple</i>(<i class="v">resourceGroup</i>.<i class="v">Name</i>, <i class="v">cosmosAccount</i>.<i class="v">Name</i>)</div>
<div class="ln" style="top:786.07px">54</div>
<div class="cd" style="top:786.07px">                .<i class="f">Apply</i>(<i class="v">names</i> =&gt; <i class="v">Output</i>.<i class="f">CreateSecret</i>(<i class="f">GetCosmosDatabaseConnectionString</i>(<i class="v">names</i>.<i class="v">Item1</i>, <i class="v">names</i>.<i class="v">Item2</i>)));</div>
<div class="ln" style="top:800.34px">55</div>
<div class="ln" style="top:814.61px">56</div>
<div class="cd" style="top:814.61px">        <i class="c">// set with &gt; pulumi config set myCosmosDb.autoScaleThroughput 4000</i></div>
<div class="ln" style="top:828.88px">57</div>
<div class="cd" style="top:828.88px">        <i class="k">int</i> <i class="v">autoScaleThroughput</i> = <i class="v">config</i>.<i class="f">RequireInt32</i>(<i class="s">&quot;myCosmosDb.autoScaleThroughput&quot;</i>);</div>
<div class="ln" style="top:843.16px">58</div>
<div class="ln" style="top:857.43px">59</div>
<div class="cd" style="top:857.43px">        <i class="k">string</i> <i class="v">cosmosDatabaseName</i> = <i class="s">&quot;myCosmosDatabase&quot;</i>;</div>
<div class="ln" style="top:871.70px">60</div>
<div class="cd" style="top:871.70px">        <i class="k">var</i> <i class="v">cosmosSqlDatabase</i> = <i class="k">new</i> <i class="t">SqlResourceSqlDatabase</i>(<i class="v">cosmosDatabaseName</i>, <i class="k">new</i> <i class="t">SqlResourceSqlDatabaseArgs</i>()</div>
<div class="ln" style="top:885.98px">61</div>
<div class="cd" style="top:885.98px">        {</div>
<div class="ln" style="top:900.25px">62</div>
<div class="cd" style="top:900.25px">            <i class="v">DatabaseName</i> = <i class="v">cosmosDatabaseName</i>,</div>
<div class="ln" style="top:914.52px">63</div>
<div class="cd" style="top:914.52px">            <i class="v">AccountName</i> = <i class="v">cosmosAccount</i>.<i class="v">Name</i>,</div>
<div class="ln" style="top:928.80px">64</div>
<div class="cd" style="top:928.80px">            <i class="v">ResourceGroupName</i> = <i class="v">resourceGroup</i>.<i class="v">Name</i>,</div>
<div class="ln" style="top:943.07px">65</div>
<div class="cd" style="top:943.07px">            <i class="v">Location</i> = <i class="v">resourceGroup</i>.<i class="v">Location</i>,</div>
<div class="ln" style="top:957.34px">66</div>
<div class="cd" style="top:957.34px">            <i class="v">Resource</i> = <i class="k">new</i> <i class="t">SqlDatabaseResourceArgs</i>()</div>
<div class="ln" style="top:971.61px">67</div>
<div class="cd" style="top:971.61px">            {</div>
<div class="ln" style="top:985.89px">68</div>
<div class="cd" style="top:985.89px">                <i class="v">Id</i> = <i class="v">cosmosDatabaseName</i></div>
<div class="ln" style="top:1000.16px">69</div>
<div class="cd" style="top:1000.16px">            },</div>
<div class="ln" style="top:1014.43px">70</div>
<div class="cd" style="top:1014.43px">            <i class="v">Options</i> = <i class="k">new</i> <i class="t">CreateUpdateOptionsArgs</i>()</div>
<div class="ln" style="top:1028.71px">71</div>
<div class="cd" style="top:1028.71px">            {</div>
<div class="ln" style="top:1042.98px">72</div>
<div class="cd" style="top:1042.98px">                <i class="v">AutoscaleSettings</i> = <i class="k">new</i> <i class="t">AutoscaleSettingsArgs</i>()</div>
<div class="ln" style="top:1057.25px">73</div>
<div class="cd" style="top:1057.25px">                {</div>
<div class="ln" style="top:1071.53px">74</div>
<div class="cd" style="top:1071.53px">                    <i class="v">MaxThroughput</i> = <i class="v">autoScaleThroughput</i></div>
<div class="ln" style="top:1085.80px">75</div>
<div class="cd" style="top:1085.80px">                }</div>
<div class="ln" style="top:1100.07px">76</div>
<div class="cd" style="top:1100.07px">            }</div>
<div class="ln" style="top:1114.34px">77</div>
<div class="cd" style="top:1114.34px">        });</div>
<div class="ln" style="top:1128.62px">78</div>
<div class="ln" style="top:1142.89px">79</div>
<div class="cd" style="top:1142.89px">        <i class="k">string</i> <i class="v">rulesContainerName</i> = <i class="s">&quot;rules&quot;</i>;</div>
<div class="ln" style="top:1157.16px">80</div>
<div class="cd" style="top:1157.16px">        <i class="k">var</i> <i class="v">rulesContainer</i> = <i class="k">new</i> <i class="t">SqlResourceSqlContainer</i>(<i class="v">rulesContainerName</i>, <i class="k">new</i> <i class="t">SqlResourceSqlContainerArgs</i></div>
<div class="ln" style="top:1171.44px">81</div>
<div class="cd" style="top:1171.44px">        {</div>
<svg style="position:absolute;left:300.90px;top:311.95px;width:12px;height:17px;overflow:visible" viewBox="0 0 12 17"><path d="M1.500 1.500 H4.800 Q6 1.500 6 2.800 V14.200 Q6 15.500 4.800 15.500 H1.500 M10.500 1.500 H7.200 Q6 1.500 6 2.800 M6 14.200 Q6 15.500 7.200 15.500 H10.500" fill="none" stroke="#111" stroke-width="2.200"/><path d="M1.500 1.500 H4.800 Q6 1.500 6 2.800 V14.200 Q6 15.500 4.800 15.500 H1.500 M10.500 1.500 H7.200 Q6 1.500 6 2.800 M6 14.200 Q6 15.500 7.200 15.500 H10.500" fill="none" stroke="#e8e8e8" stroke-width="1"/></svg>
</div>
</div>
<div id="status"><div id="remote"></div>
<svg style="position:absolute;left:0;top:0;width:270px;height:16px;overflow:visible" viewBox="0 1245.5 270 16" fill="none" stroke="#fff" stroke-width=".9">
<path d="M9.300 1252.200 L12.700 1255.100 L9.300 1258 M16.200 1249.400 L13 1252.300 L16.200 1255.200" stroke-width="1"/>
<circle cx="33.800" cy="1250.200" r="1.500"/><circle cx="33.800" cy="1257.500" r="1.500"/><circle cx="38.800" cy="1251.800" r="1.500"/><path d="M33.800 1251.700 V1256 M38.800 1253.300 Q38.800 1255.300 34.200 1255.700"/>
<path d="M88.900 1253.600 A4 4 0 0 1 96.400 1252.400 M96.700 1254.800 A4 4 0 0 1 89.200 1256"/><path d="M96.900 1250.200 L96.500 1252.600 L94.200 1252.400 M88.700 1258.200 L89.100 1255.800 L91.400 1256" stroke-width=".8"/>
<circle cx="114.400" cy="1254.200" r="4.300"/><path d="M112.500 1252.300 L116.300 1256.100 M116.300 1252.300 L112.500 1256.100"/>
<path d="M135.500 1250.200 L140.300 1258.300 H130.700 Z" stroke-linejoin="round"/><path d="M135.500 1252.800 V1255.600 M135.500 1256.400 V1257.300" stroke-width=".8"/>
<path d="M164.600 1249.300 Q165.800 1251.500 167.500 1253.800 Q169.300 1256.500 166.800 1258.300 Q168 1255.800 165.600 1254.200 Q164.200 1256.200 164.600 1258.300 Q160.300 1256.800 162.300 1253.300 Q164 1251 164.600 1249.300 Z" stroke-width=".8" stroke-linejoin="round"/>
<path d="M183.100 1250.400 H186.600 L187.400 1251.500 H191.900 V1257.800 H183.100 Z M183.100 1252.900 H186.400 L187.300 1251.700" stroke-linejoin="round" stroke-width="1"/>
</svg>
<span style="left:44px;letter-spacing:-.1px">master*</span><span style="left:122.600px">0</span><span style="left:142.800px">0</span><span style="left:195.400px;letter-spacing:-.05px">PulumiDemo.sln</span>
</div>
</body></html>
